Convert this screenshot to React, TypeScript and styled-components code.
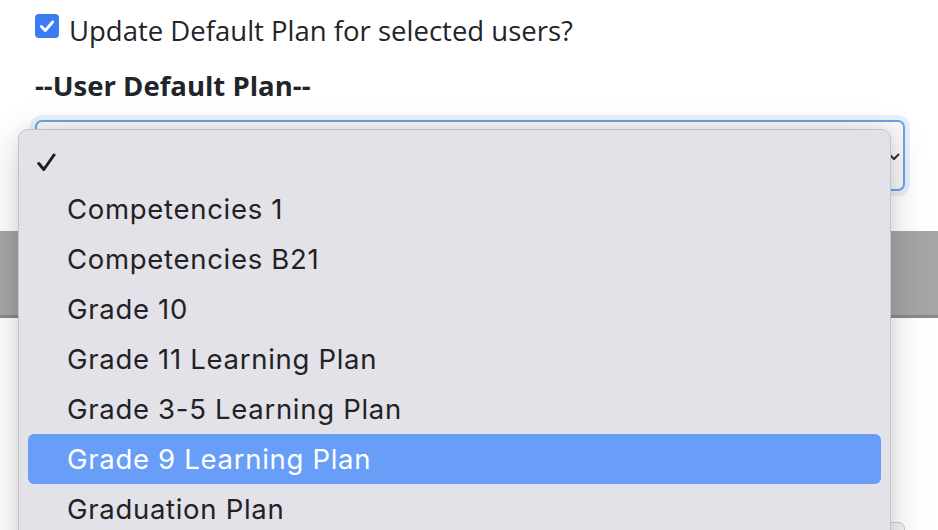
import styled, { createGlobalStyle } from 'styled-components';

const GlobalStyle = createGlobalStyle`
    html, body {
        margin: 0;
        padding: 0;
        background: #ffffff;
        overflow: hidden;
    }
`;

const Page = styled.div`
    position: relative;
    width: 938px;
    height: 530px;
    overflow: hidden;
    background: #ffffff;
    font-family: 'Open Sans', 'Noto Sans', sans-serif;
    color: #212529;
`;

const FormArea = styled.div`
    padding: 12px 33px 0 35px;
`;

const CheckRow = styled.label`
    display: flex;
    align-items: flex-start;
    gap: 10px;
    font-size: 27.5px;
    line-height: 37.5px;
`;

const CheckBox = styled.span`
    flex: none;
    margin-top: 2px;
    width: 24px;
    height: 24px;
    border-radius: 4px;
    background: #3b7cf5;
    display: flex;
    align-items: center;
    justify-content: center;
`;

const FieldLabel = styled.div`
    margin-top: 17px;
    font-size: 27.5px;
    line-height: 37.5px;
    font-weight: 700;
`;

const SelectBox = styled.div`
    margin-top: 16px;
    height: 67px;
    border: 2px solid #6ba2e6;
    border-radius: 7px;
    background: #f8f8f8;
    box-shadow: 0 0 0 5px rgba(120, 170, 235, 0.18);
    display: flex;
    align-items: center;
    justify-content: flex-end;
    padding-right: 2px;
`;

const Band = styled.div`
    margin-top: 40px;
    height: 84px;
    background: #a6a6a6;
    border-bottom: 3px solid #8a8a8a;
`;

const LowerField = styled.div`
    margin: 204px 33px 0 35px;
    height: 40px;
    border: 1px solid #c9c9cc;
    border-radius: 7px;
    background: #f4f4f6;
`;

const Menu = styled.ul`
    position: absolute;
    left: 18px;
    top: 129px;
    width: 873px;
    height: 440px;
    margin: 0;
    padding: 4px 0 0;
    list-style: none;
    box-sizing: border-box;
    background: #e3e2e8;
    border: 1px solid #c4c4c8;
    border-radius: 10px;
    box-shadow: 0 10px 40px rgba(0, 0, 0, 0.18), 0 0 12px rgba(0, 0, 0, 0.06);
    font-family: Inter, 'Liberation Sans', sans-serif;
`;

const Item = styled.li<{ $active?: boolean }>`
    position: relative;
    height: 50px;
    margin: 0 9px;
    padding-left: 39px;
    display: flex;
    align-items: center;
    border-radius: 6px;
    font-size: 27.5px;
    letter-spacing: 0.7px;
    color: ${(p) => (p.$active ? '#ffffff' : '#222226')};
    background: ${(p) => (p.$active ? '#699ef8' : 'transparent')};
`;

const Tick = styled.span`
    position: absolute;
    left: 9px;
    top: 19px;
    display: flex;
`;

const plans = [
    'Competencies 1',
    'Competencies B21',
    'Grade 10',
    'Grade 11 Learning Plan',
    'Grade 3-5 Learning Plan',
    'Grade 9 Learning Plan',
    'Graduation Plan',
    'High School Plan',
];

export default function App() {
    return (
        <>
            <GlobalStyle />
            <Page>
                <FormArea>
                    <CheckRow>
                        <CheckBox>
                            <svg width="18" height="18" viewBox="0 0 16 16">
                                <path
                                    d="M3 8.5 L6.5 12 L13 4.5"
                                    fill="none"
                                    stroke="#ffffff"
                                    strokeWidth="2.6"
                                    strokeLinecap="round"
                                    strokeLinejoin="round"
                                />
                            </svg>
                        </CheckBox>
                        Update Default Plan for selected users?
                    </CheckRow>
                    <FieldLabel>--User Default Plan--</FieldLabel>
                    <SelectBox>
                        <svg width="14" height="14" viewBox="0 0 14 14">
                            <path d="M2 5 L7 10 L12 5" fill="none" stroke="#333" strokeWidth="2" />
                        </svg>
                    </SelectBox>
                </FormArea>
                <Band />
                <LowerField />
                <Menu>
                    <Item>
                        <Tick>
                            <svg width="19" height="19" viewBox="0 0 19 19">
                                <path
                                    d="M1.8 10.5 L6.8 16.5 L17 2"
                                    fill="none"
                                    stroke="#1f1f22"
                                    strokeWidth="3"
                                    strokeLinecap="round"
                                    strokeLinejoin="round"
                                />
                            </svg>
                        </Tick>
                    </Item>
                    {plans.map((name) => (
                        <Item key={name} $active={name === 'Grade 9 Learning Plan'}>
                            {name}
                        </Item>
                    ))}
                </Menu>
            </Page>
        </>
    );
}
